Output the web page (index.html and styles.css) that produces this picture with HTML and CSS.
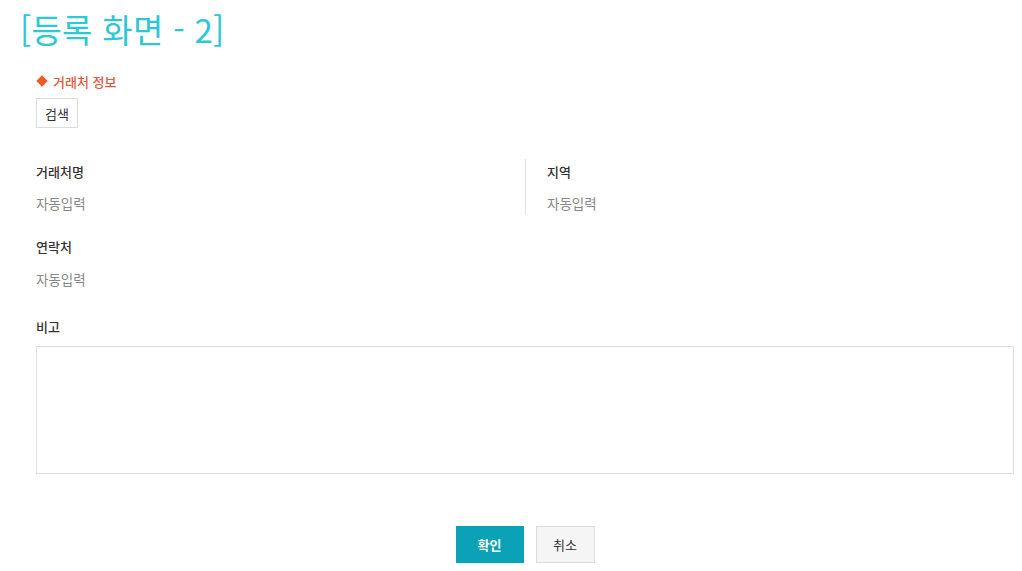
FILE: index.html
```html
<!DOCTYPE html>
<html lang="ko">
<head>
<meta charset="utf-8">
<title>등록 화면 - 2</title>
<link rel="stylesheet" href="styles.css">
</head>
<body>
<h1 class="title">[등록 화면 - 2]</h1>
<main class="content">
  <div class="section-head"><span class="diamond"></span><span>거래처 정보</span></div>
  <button class="btn-search" type="button">검색</button>
  <div class="grid">
    <div class="field">
      <div class="label">거래처명</div>
      <div class="value">자동입력</div>
    </div>
    <div class="field field-right">
      <div class="label">지역</div>
      <div class="value">자동입력</div>
    </div>
  </div>
  <div class="field field-row2">
    <div class="label">연락처</div>
    <div class="value">자동입력</div>
  </div>
  <div class="memo">
    <div class="label">비고</div>
    <textarea class="memo-box"></textarea>
  </div>
  <div class="actions">
    <button class="btn btn-primary" type="button">확인</button>
    <button class="btn btn-cancel" type="button">취소</button>
  </div>
</main>
</body>
</html>
```
FILE: styles.css
```css
* { box-sizing: border-box; }
html, body { margin: 0; padding: 0; background: #fff; }
body {
  font-family: "Noto Sans CJK KR", "Noto Sans", sans-serif;
  color: #333;
  width: 1022px;
  height: 571px;
  overflow: hidden;
}
.title {
  margin: 0;
  padding: 9px 0 0 20px;
  font-size: 33px;
  line-height: 40px;
  font-weight: 400;
  color: #2ec7d4;
  letter-spacing: 0.3px;
}
.content {
  padding: 0 8px 0 36px;
}
.section-head {
  margin-top: 22px;
  display: flex;
  align-items: center;
  height: 20px;
  font-size: 13px;
  font-weight: 500;
  color: #e0583f;
}
.diamond {
  width: 8px;
  height: 8px;
  background: #f05a28;
  transform: rotate(45deg);
  margin: 0 7px 0 2px;
}
.btn-search {
  margin-top: 7px;
  display: block;
  height: 30px;
  width: 42px;
  padding: 0;
  border: 1px solid #dcdcdc;
  background: #fff;
  font-family: inherit;
  font-size: 13px;
  color: #333;
}
.grid {
  margin-top: 31px;
  display: grid;
  grid-template-columns: 489px 1fr;
}
.field {
  padding: 3px 0 2px;
}
.field-right {
  border-left: 1px solid #e3e3e3;
  padding-left: 21px;
}
.label {
  font-size: 13px;
  line-height: 20px;
  font-weight: 500;
  color: #333;
}
.value {
  margin-top: 11px;
  font-size: 13.5px;
  line-height: 20px;
  color: #888;
}
.field-row2 {
  margin-top: 19px;
}
.field-row2 .value { margin-top: 12px; }
.memo {
  margin-top: 26px;
}
.memo-box {
  display: block;
  margin-top: 9px;
  width: 100%;
  height: 128px;
  border: 1px solid #dedede;
  resize: none;
  font-family: inherit;
  outline: none;
}
.actions {
  margin-top: 52px;
  display: flex;
  justify-content: center;
  gap: 12px;
}
.btn {
  height: 37px;
  padding: 0;
  font-family: inherit;
  font-size: 13px;
}
.btn-primary {
  width: 68px;
  border: none;
  background: #0ba1b6;
  color: #fff;
  font-weight: 700;
}
.btn-cancel {
  width: 59px;
  border: 1px solid #dcdcdc;
  background: #f5f5f5;
  color: #333;
}
```
